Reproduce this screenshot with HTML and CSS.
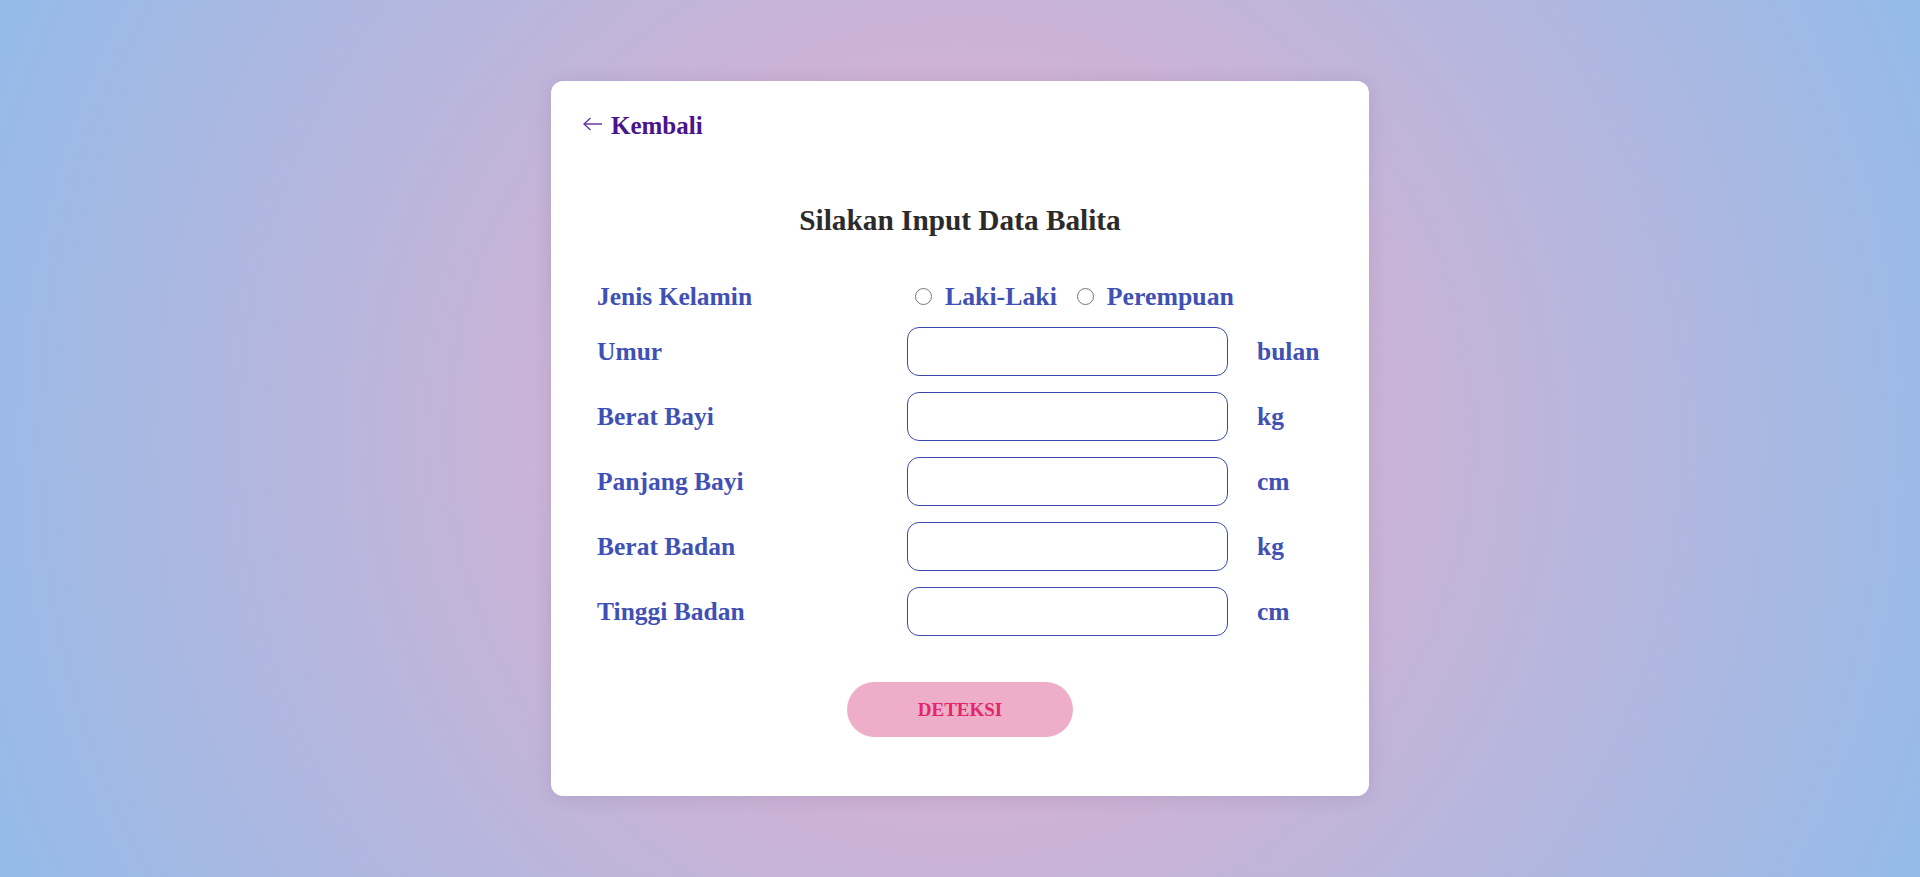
FILE: index.html
```html
<html>
<head>
  <meta charset="utf-8">
  <title>Deteksi Stunting</title>
  <link rel="stylesheet" href="styles.css">
</head>
<body>
<div class="container">
  <a class="back-link" href="#">
    <svg class="back-icon" width="20" height="14" viewBox="0 0 20 14">
      <path d="M1 7 H19 M7.5 1 L1 7 L7.5 13" fill="none" stroke="#6a3aa8" stroke-width="1.4"/>
    </svg>
    <span>Kembali</span>
  </a>

  <h1>Silakan Input Data Balita</h1>

  <form class="form-grid">
    <label class="field-label">Jenis Kelamin</label>
    <div class="radio-group">
      <input type="radio" name="jk" id="laki">
      <label for="laki" class="radio-label">Laki-Laki</label>
      <input type="radio" name="jk" id="perempuan">
      <label for="perempuan" class="radio-label">Perempuan</label>
    </div>

    <label class="field-label" for="umur">Umur</label>
    <input class="field-input" type="text" id="umur">
    <span class="unit">bulan</span>

    <label class="field-label" for="bb-lahir">Berat Bayi</label>
    <input class="field-input" type="text" id="bb-lahir">
    <span class="unit">kg</span>

    <label class="field-label" for="pb-lahir">Panjang Bayi</label>
    <input class="field-input" type="text" id="pb-lahir">
    <span class="unit">cm</span>

    <label class="field-label" for="bb">Berat Badan</label>
    <input class="field-input" type="text" id="bb">
    <span class="unit">kg</span>

    <label class="field-label" for="tb">Tinggi Badan</label>
    <input class="field-input" type="text" id="tb">
    <span class="unit">cm</span>
  </form>

  <button type="button" class="detect-btn">DETEKSI</button>
</div>
</body>
</html>
```

FILE: styles.css
```css
body {
  font-family: "Liberation Serif", serif;
  margin: 0;
  padding: 0;
  min-height: 100vh;
  display: flex;
  align-items: center;
  justify-content: center;
  background: radial-gradient(circle, #eeaeca 0%, #94bbe9 100%);
}
.container {
  width: 818px;
  box-sizing: border-box;
  background-color: #fff;
  border-radius: 12px;
  padding: 31px 32px 59px;
  box-shadow: 0 2px 18px rgba(60, 40, 90, 0.12);
}
.back-link {
  display: flex;
  align-items: center;
  gap: 8px;
  width: fit-content;
  text-decoration: none;
  color: #4a148c;
  font-weight: bold;
  font-size: 25px;
  line-height: 28px;
}
.back-icon {
  margin-bottom: 5px;
}
h1 {
  margin: 62px 0 44px;
  text-align: center;
  font-size: 29.3px;
  line-height: 36px;
  color: #2b2b2b;
}
.form-grid {
  display: grid;
  grid-template-columns: 310px 321px auto;
  row-gap: 16px;
  align-items: center;
  margin: 0 14px;
  font-weight: bold;
  font-size: 25.5px;
  line-height: 29px;
  color: #3f51b5;
}
.radio-group {
  grid-column: 2 / 4;
  display: flex;
  align-items: center;
}
.radio-group input {
  width: 17px;
  height: 17px;
  margin: 0 13px 0 8px;
}
.radio-group input + label + input {
  margin-left: 20px;
}
.radio-label {
  font-size: 25.8px;
}
.field-input {
  height: 49px;
  box-sizing: border-box;
  border: 1px solid #3949ab;
  border-radius: 12px;
  font-size: 20px;
  padding: 0 12px;
  outline: none;
}
.unit {
  padding-left: 29px;
}
.detect-btn {
  display: block;
  margin: 46px auto 0;
  width: 226px;
  height: 55px;
  border: none;
  border-radius: 28px;
  background-color: #eeaeca;
  color: #e3266a;
  font-family: "Liberation Serif", serif;
  font-weight: bold;
  font-size: 19px;
  cursor: pointer;
}
```
